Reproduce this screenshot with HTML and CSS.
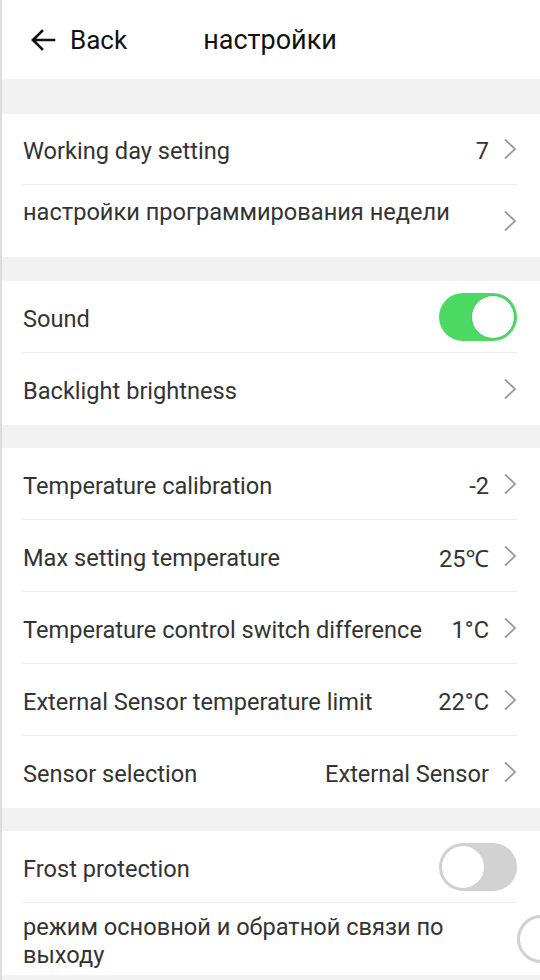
FILE: index.html
```html
<!DOCTYPE html>
<html lang="ru">
<head>
<meta charset="utf-8">
<title>настройки</title>
<link rel="stylesheet" href="styles.css">
</head>
<body>
<div class="page">
  <header class="header">
    <div class="back">
      <svg class="back-arrow" width="26" height="22" viewBox="0 0 26 22"><path d="M24 11H3M12 2L3 11l9 9" fill="none" stroke="#111" stroke-width="2.6" stroke-linecap="square"/></svg>
      <span class="back-text">Back</span>
    </div>
    <div class="title">настройки</div>
  </header>

  <div class="gap gap-top"></div>

  <section class="group">
    <div class="row row-first">
      <span class="label">Working day setting</span>
      <span class="value">7</span>
      <svg class="chev" width="14" height="22" viewBox="0 0 14 22"><path d="M2 1.5l10 9.5-10 9.5" fill="none" stroke="#9a9a9a" stroke-width="1.8"/></svg>
    </div>
    <div class="row row-top">
      <span class="label">настройки программирования недели</span>
      <svg class="chev" width="14" height="22" viewBox="0 0 14 22"><path d="M2 1.5l10 9.5-10 9.5" fill="none" stroke="#9a9a9a" stroke-width="1.8"/></svg>
    </div>
  </section>

  <div class="gap gap-first"></div>

  <section class="group">
    <div class="row">
      <span class="label">Sound</span>
      <span class="toggle on"><span class="knob"></span></span>
    </div>
    <div class="row">
      <span class="label">Backlight brightness</span>
      <svg class="chev" width="14" height="22" viewBox="0 0 14 22"><path d="M2 1.5l10 9.5-10 9.5" fill="none" stroke="#9a9a9a" stroke-width="1.8"/></svg>
    </div>
  </section>

  <div class="gap"></div>

  <section class="group">
    <div class="row">
      <span class="label">Temperature calibration</span>
      <span class="value">-2</span>
      <svg class="chev" width="14" height="22" viewBox="0 0 14 22"><path d="M2 1.5l10 9.5-10 9.5" fill="none" stroke="#9a9a9a" stroke-width="1.8"/></svg>
    </div>
    <div class="row">
      <span class="label">Max setting temperature</span>
      <span class="value">25℃</span>
      <svg class="chev" width="14" height="22" viewBox="0 0 14 22"><path d="M2 1.5l10 9.5-10 9.5" fill="none" stroke="#9a9a9a" stroke-width="1.8"/></svg>
    </div>
    <div class="row">
      <span class="label">Temperature control switch difference</span>
      <span class="value">1°C</span>
      <svg class="chev" width="14" height="22" viewBox="0 0 14 22"><path d="M2 1.5l10 9.5-10 9.5" fill="none" stroke="#9a9a9a" stroke-width="1.8"/></svg>
    </div>
    <div class="row">
      <span class="label">External Sensor temperature limit</span>
      <span class="value">22°C</span>
      <svg class="chev" width="14" height="22" viewBox="0 0 14 22"><path d="M2 1.5l10 9.5-10 9.5" fill="none" stroke="#9a9a9a" stroke-width="1.8"/></svg>
    </div>
    <div class="row">
      <span class="label">Sensor selection</span>
      <span class="value">External Sensor</span>
      <svg class="chev" width="14" height="22" viewBox="0 0 14 22"><path d="M2 1.5l10 9.5-10 9.5" fill="none" stroke="#9a9a9a" stroke-width="1.8"/></svg>
    </div>
  </section>

  <div class="gap"></div>

  <section class="group">
    <div class="row">
      <span class="label">Frost protection</span>
      <span class="toggle"><span class="knob"></span></span>
    </div>
    <div class="row row-wrap">
      <span class="label label-fixed">режим основной и обратной связи по выходу</span>
      <span class="toggle"><span class="knob"></span></span>
    </div>
  </section>

  <div class="gap"></div>
</div>
</body>
</html>
```

FILE: styles.css
```css
* { box-sizing: border-box; }

html, body {
  margin: 0;
  padding: 0;
  background: #ffffff;
}

body {
  font-family: Roboto, "Noto Sans", "Liberation Sans", sans-serif;
  overflow: hidden;
  width: 540px;
  height: 980px;
}

.page {
  border-left: 2px solid #dcdcdc;
  min-height: 980px;
  overflow: hidden;
}

.header {
  height: 79px;
  display: flex;
  align-items: center;
  padding-left: 28px;
  color: #111;
}

.back {
  display: flex;
  align-items: center;
  gap: 14px;
}

.back-text {
  font-size: 26px;
}

.title {
  font-size: 27px;
  margin-left: 76px;
}

.gap {
  height: 23px;
  background: #f1f1f1;
}

.gap-top {
  height: 35px;
}

.gap-first {
  height: 24px;
}

.group {
  padding: 0 23px 0 21px;
  background: #fff;
}

.row {
  height: 72px;
  display: flex;
  align-items: center;
  border-bottom: 1px solid #ececec;
  color: #333;
  font-size: 23.6px;
}

.row-first {
  height: 71px;
}

.row:last-child {
  border-bottom: none;
}

.label {
  flex: 1;
  white-space: nowrap;
  padding-top: 4px;
}

.value {
  margin-right: 14px;
  padding-top: 4px;
}

.chev {
  flex-shrink: 0;
}

.row-top {
  align-items: flex-start;
}

.row-top .label {
  padding-top: 13px;
}

.row-top .chev {
  margin-top: 25px;
}

.row-wrap {
  line-height: 28px;
}

.label-fixed {
  flex: 0 0 494px;
  white-space: normal;
}

.toggle {
  flex-shrink: 0;
  width: 78px;
  height: 48px;
  border-radius: 24px;
  background: #d2d2d2;
  position: relative;
  display: block;
}

.toggle .knob {
  position: absolute;
  top: 1px;
  left: 1px;
  width: 46px;
  height: 46px;
  border-radius: 50%;
  background: #fff;
  border: 2px solid #d0d0d0;
}

.toggle.on {
  background: #4cd964;
}

.toggle.on .knob {
  left: 32px;
  top: 2px;
  width: 44px;
  height: 44px;
  border: 1px solid #46c85c;
}
```
